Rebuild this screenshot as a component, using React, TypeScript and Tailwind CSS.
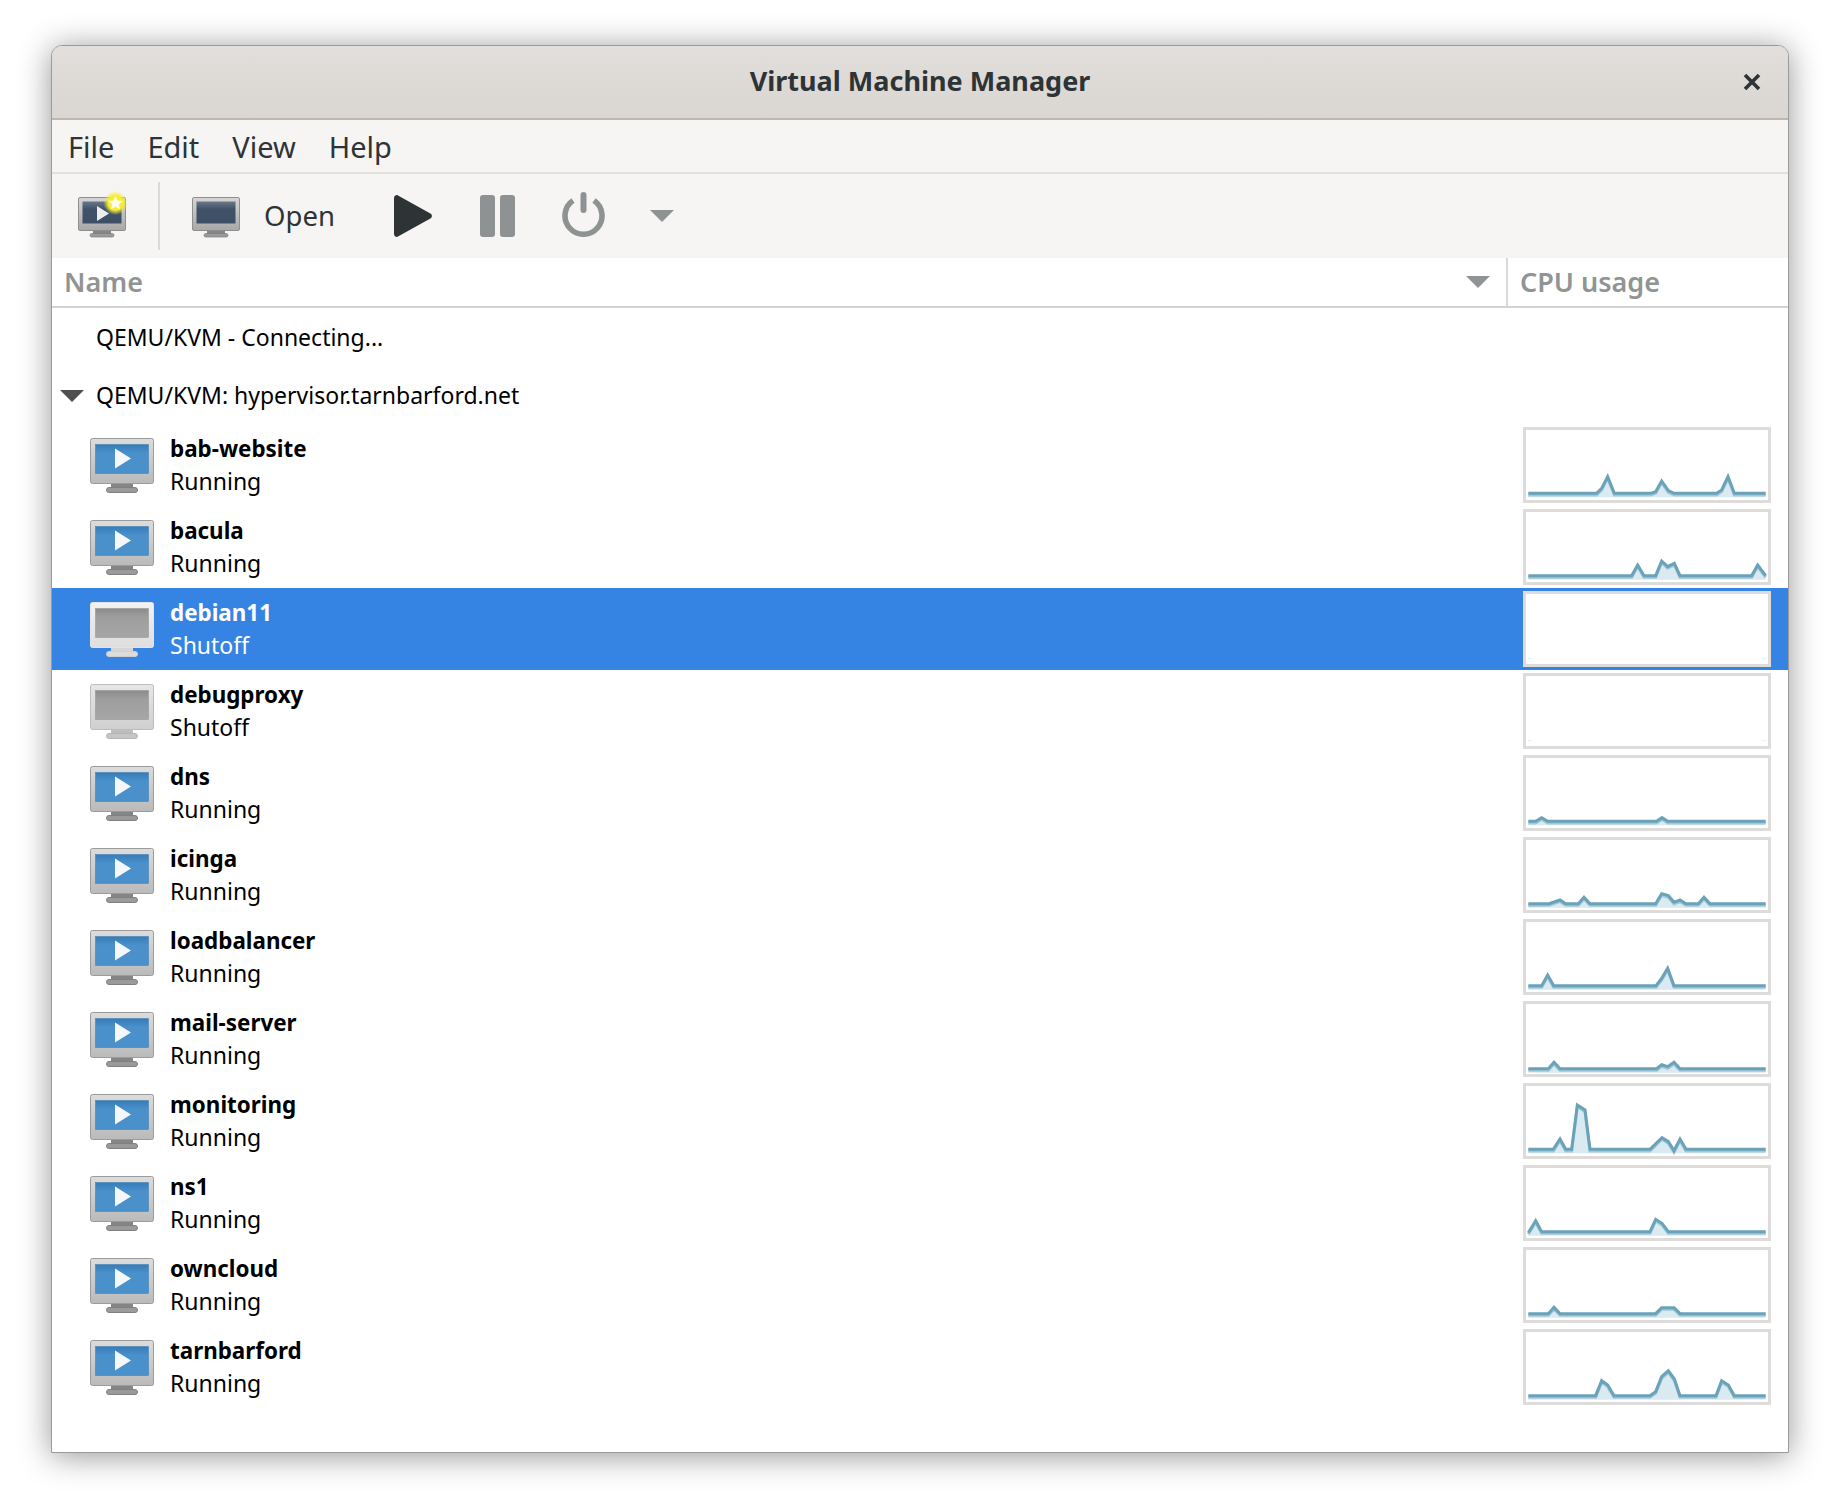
const F = "font-['Noto_Sans','Open_Sans',sans-serif]";

const graphs: Record<string, { top: number; base: number; pts: number[][] }> = {
  "bab-website": { top: 21, base: 220, pts: [[85,220],[290,220],[305,205],[323,170],[343,220],[452,220],[467,215],[485,183],[505,212],[522,220],[650,220],[665,210],[684,170],[703,220],[797,220]] },
  bacula: { top: 267, base: 467, pts: [[85,467],[395,467],[413,435],[432,467],[467,467],[485,423],[503,440],[523,430],[540,467],[755,467],[773,435],[797,467]] },
  dns: { top: 45, base: 244, pts: [[85,244],[107,244],[125,233],[143,244],[470,244],[486,233],[503,244],[797,244]] },
  icinga: { top: 291, base: 491, pts: [[85,491],[147,491],[180,480],[197,491],[235,491],[252,472],[270,491],[467,491],[485,461],[505,467],[522,487],[540,480],[558,491],[595,491],[612,472],[630,491],[797,491]] },
  loadbalancer: { top: 537, base: 737, pts: [[85,737],[125,737],[143,705],[161,737],[468,737],[485,715],[503,685],[522,737],[797,737]] },
  "mail-server": { top: -179, base: 24, pts: [[85,24],[145,24],[162,5],[180,24],[470,24],[485,12],[503,18],[522,5],[540,24],[797,24]] },
  monitoring: { top: 69, base: 268, pts: [[85,268],[160,268],[180,237],[197,268],[215,268],[232,135],[255,150],[270,268],[450,268],[486,233],[505,245],[522,272],[540,237],[558,268],[797,268]] },
  ns1: { top: 315, base: 515, pts: [[85,518],[107,482],[125,515],[450,515],[467,478],[486,490],[505,515],[797,515]] },
  owncloud: { top: 561, base: 761, pts: [[85,761],[145,761],[162,742],[180,761],[467,761],[485,743],[522,743],[540,761],[797,761]] },
  tarnbarford: { top: 57, base: 257, pts: [[85,257],[287,257],[305,212],[323,225],[342,257],[450,257],[467,245],[485,200],[505,182],[523,207],[540,257],[648,257],[665,212],[685,225],[703,257],[797,257]] },
};

const vms = [
  ["bab-website", "Running"],
  ["bacula", "Running"],
  ["debian11", "Shutoff"],
  ["debugproxy", "Shutoff"],
  ["dns", "Running"],
  ["icinga", "Running"],
  ["loadbalancer", "Running"],
  ["mail-server", "Running"],
  ["monitoring", "Running"],
  ["ns1", "Running"],
  ["owncloud", "Running"],
  ["tarnbarford", "Running"],
];

function Spark({ name }: { name: string }) {
  const g = graphs[name];
  let line = "";
  let area = "";
  if (g) {
    const pts = g.pts.map((p) => [(p[0] - 69) / 3, (p[1] - g.top) / 3]);
    line = pts.map((p) => p.join(",")).join(" ");
    const bottom = (g.base - g.top) / 3 + 4;
    area = `${pts[0][0]},${bottom} ${line} ${pts[pts.length - 1][0]},${bottom}`;
  }
  return (
    <div className="relative h-[76px] w-[248px] shrink-0 border-[3px] border-[#dedbdb] bg-white">
      <svg width="248" height="76" viewBox="0 0 248 76" className="absolute -left-[3px] -top-[3px]">
        {g ? (
          <>
            <polygon points={area} fill="#d9eaf1" />
            <polyline points={line} fill="none" stroke="#a2c7d6" strokeWidth="3" transform="translate(0,1.6)" />
            <polyline points={line} fill="none" stroke="#6aa2b9" strokeWidth="3" />
          </>
        ) : (
          <>
            <polygon points="5,67 12,68 5,68" fill="#d9eaf1" />
            <polygon points="243,67 236,68 243,68" fill="#d9eaf1" />
          </>
        )}
      </svg>
    </div>
  );
}

function Monitor({ on, sel }: { on: boolean; sel: boolean }) {
  const id = on ? "b" : sel ? "s" : "g";
  const frameTop = on ? "#dcdcdc" : sel ? "#f2f2f2" : "#e6e6e6";
  const frameBottom = on ? "#bababa" : sel ? "#dedede" : "#cfcfcf";
  return (
    <svg width="64" height="56" viewBox="0 0 64 56" className="mt-[1px] blur-[0.35px]">
      <defs>
        <linearGradient id={`f${id}`} x1="0" x2="0" y1="0" y2="1">
          <stop offset="0" stopColor={frameTop} />
          <stop offset="1" stopColor={frameBottom} />
        </linearGradient>
        <linearGradient id={`s${id}`} x1="0" x2="0" y1="0" y2="1">
          <stop offset="0" stopColor={on ? "#357cb8" : "#8b8b8b"} />
          <stop offset="0.3" stopColor={on ? "#4a90cb" : "#9e9e9e"} />
          <stop offset="1" stopColor={on ? "#4a90cb" : "#a6a6a6"} />
        </linearGradient>
      </defs>
      <rect x="21" y="45" width="22" height="6" fill={on ? "#858585" : sel ? "#d6d6d6" : "#bdbdbd"} />
      <rect x="16.5" y="49.5" width="31" height="5" rx="2.5" fill={on ? "#9a9a9a" : sel ? "#dcdcdc" : "#c6c6c6"} stroke={on ? "#808080" : sel ? "#d0d0d0" : "#b5b5b5"} />
      <rect x="0.5" y="0.5" width="63" height="45" rx="2" fill={`url(#f${id})`} stroke={on ? "#9b9b9b" : sel ? "#e4e4e4" : "#bdbdbd"} />
      <rect x="5.5" y="6.5" width="53" height="29" fill={`url(#s${id})`} stroke={on ? "#3a7bb0" : "#8f8f8f"} strokeWidth="0.5" />
      {on && <polygon points="25,10.5 25,30.5 41,20.5" fill="#f4f8fb" />}
    </svg>
  );
}

function DarkMonitor({ star }: { star?: boolean }) {
  const id = star ? "x" : "y";
  return (
    <svg width="48" height="42" viewBox="0 0 48 42" className="mt-[4px] overflow-visible blur-[0.3px]">
      <defs>
        <linearGradient id={`sc${id}`} x1="0" x2="0" y1="0" y2="1">
          <stop offset="0" stopColor="#6a7888" />
          <stop offset="0.35" stopColor="#415268" />
          <stop offset="1" stopColor="#3d4f66" />
        </linearGradient>
        <linearGradient id={`fr${id}`} x1="0" x2="0" y1="0" y2="1">
          <stop offset="0" stopColor="#d5d5d5" />
          <stop offset="1" stopColor="#a8a8a8" />
        </linearGradient>
        <radialGradient id={`glow${id}`}>
          <stop offset="0.6" stopColor="#f5ee30" />
          <stop offset="1" stopColor="#f5ee30" stopOpacity="0" />
        </radialGradient>
      </defs>
      <rect x="15" y="33" width="18" height="4" fill="#858585" />
      <rect x="12" y="36.5" width="24" height="3.5" rx="1.7" fill="#9a9a9a" stroke="#808080" strokeWidth="0.7" />
      <rect x="0.5" y="0.5" width="47" height="33" rx="1.5" fill={`url(#fr${id})`} stroke="#8f8f8f" />
      <rect x="4.5" y="4.5" width="39" height="22" fill={`url(#sc${id})`} />
      {star && (
        <>
          <polygon points="19,9 19,24 31,16.5" fill="#eeeeee" />
          <circle cx="37.5" cy="6" r="12" fill={`url(#glow${id})`} />
          <polygon points="37.5,-1 39.7,3.5 44.7,4 40.9,7.3 42,12.3 37.5,9.7 33,12.3 34.1,7.3 30.3,4 35.3,3.5" fill="#fffde8" />
        </>
      )}
    </svg>
  );
}

export default function App() {
  return (
    <div className={`h-[1510px] w-[1840px] overflow-hidden bg-white pl-[51px] pt-[45px] ${F}`}>
      <div className="flex h-[1408px] w-[1738px] flex-col overflow-hidden rounded-t-[11px] border border-[#9a9a9a] bg-white shadow-[0_3px_32px_rgba(0,0,0,0.42)]">
        <div className="relative flex h-[74px] shrink-0 items-center justify-center border-b-2 border-[#bfb8b1] bg-gradient-to-b from-[#e1dedb] to-[#dad6d2]">
          <span className="-mt-[2px] text-[27px] font-bold text-[#2e3436]">Virtual Machine Manager</span>
          <svg width="18" height="18" viewBox="0 0 18 18" className="absolute right-[27px] top-[27px]">
            <path d="M2 2 L16 16 M16 2 L2 16" stroke="#2e3436" strokeWidth="3.6" />
          </svg>
        </div>

        <div className="flex h-[54px] shrink-0 items-center gap-[33px] border-b-2 border-[#e2dfdc] bg-[#f6f5f4] pl-[16px] pt-[2px] text-[29px] text-[#2e3436]">
          <span>File</span>
          <span>Edit</span>
          <span>View</span>
          <span>Help</span>
        </div>

        <div className="flex h-[84px] shrink-0 items-center bg-[#f6f5f4] pl-[26px] text-[#2e3436]">
          <DarkMonitor star />
          <div className="ml-[32px] h-[68px] w-[2px] bg-[#dcdad7]" />
          <div className="ml-[32px] flex"><DarkMonitor /></div>
          <span className="-mt-[1px] ml-[24px] w-[73px] text-[27.5px]">Open</span>
          <svg width="38" height="42" viewBox="0 0 38 42" className="ml-[57px]">
            <path d="M3 0 C1.2 0 0 1.4 0 3 V39 C0 41.2 2.2 42.6 4 41.6 L36.4 23.4 C38.4 22.2 38.4 19.8 36.4 18.6 L4 0.4 C3.6 0.2 3.3 0 3 0 Z" fill="#2e3436" />
          </svg>
          <div className="ml-[48px] flex gap-[5px]">
            <div className="h-[42px] w-[15px] rounded-[3px] bg-[#8f9293]" />
            <div className="h-[42px] w-[15px] rounded-[3px] bg-[#8f9293]" />
          </div>
          <svg width="43" height="45" viewBox="0 0 43 45" fill="none" className="-mt-[3px] ml-[47px]">
            <path d="M11 8.5 A18.5 18.5 0 1 0 32 8.5" stroke="#8f9293" strokeWidth="5.6" />
            <path d="M21.5 3 V18" stroke="#8f9293" strokeWidth="6" strokeLinecap="round" />
          </svg>
          <svg width="24" height="12" viewBox="0 0 24 12" className="ml-[45px]">
            <polygon points="0,0 24,0 12,12" fill="#8f9293" />
          </svg>
        </div>

        <div className="flex h-[50px] shrink-0 border-b-2 border-[#d5d2cf] bg-white text-[27px] font-semibold text-[#919494]">
          <div className="relative flex flex-1 items-center border-r-2 border-[#dcd9d6] pl-[12px]">
            Name
            <svg width="24" height="12" viewBox="0 0 24 12" className="absolute right-[16px] top-[18px]">
              <polygon points="0,0 24,0 12,12" fill="#919494" />
            </svg>
          </div>
          <div className="flex w-[280px] items-center pl-[12px]">CPU usage</div>
        </div>

        <div className="flex-1 bg-white text-[23px] text-black">
          <div className="flex h-[59px] items-center pl-[44px]">QEMU/KVM - Connecting...</div>
          <div className="relative flex h-[57px] items-center pl-[44px]">
            <svg width="24" height="12" viewBox="0 0 24 12" className="absolute left-[8px] top-[23px]">
              <polygon points="0,0 24,0 12,12" fill="#505050" />
            </svg>
            QEMU/KVM: hypervisor.tarnbarford.net
          </div>
          {vms.map(([name, state]) => {
            const sel = name === "debian11";
            return (
              <div key={name} className={`flex h-[82px] items-center pl-[38px] pr-[17px] ${sel ? "bg-[#3584e4] text-white" : ""}`}>
                <Monitor on={state === "Running"} sel={sel} />
                <div className="ml-[16px] flex-1 leading-[32px]">
                  <div className="text-[22.4px] font-bold">{name}</div>
                  <div>{state}</div>
                </div>
                <Spark name={name} />
              </div>
            );
          })}
        </div>
      </div>
    </div>
  );
}
